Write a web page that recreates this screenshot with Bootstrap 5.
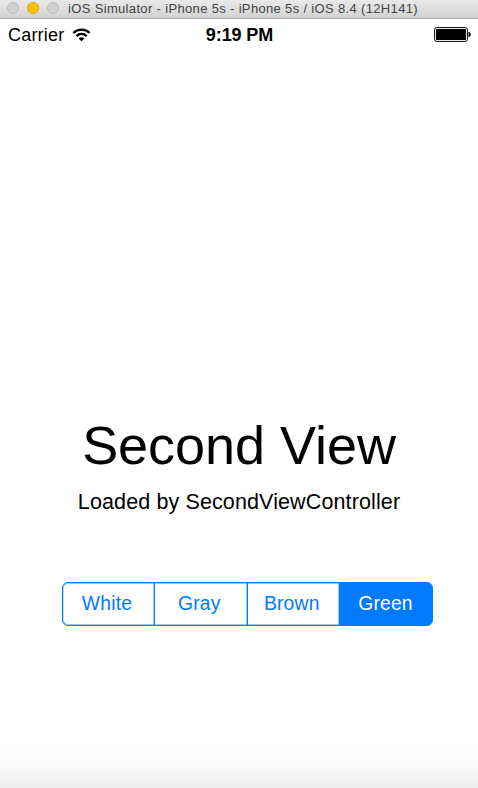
<!DOCTYPE html>
<html lang="en">
<head>
<meta charset="utf-8">
<meta name="viewport" content="width=device-width, initial-scale=1">
<title>iOS Simulator</title>
<link href="https://cdn.jsdelivr.net/npm/bootstrap@5.3.0/dist/css/bootstrap.min.css" rel="stylesheet">
<style>
body{font-family:"Liberation Sans",Arial,sans-serif;color:#000;height:788px;overflow:hidden;background:#fff}
.titlebar{height:19px;background:linear-gradient(#e9e9e9,#d2d2d2);border-bottom:1px solid #ababab;padding:0 0 2px 7px}
.dot{width:12px;height:12px;background:#cfcfcf;border:1px solid #b9b9b9;margin-right:8px}
.dot-min{background:#ffbe05;border-color:#e2a30c}
.wtitle{font-size:13px;line-height:16px;padding-top:1px;color:#444;margin-left:1px;letter-spacing:.34px}
.status{height:31px;padding:0 7px 0 8px;font-size:18px;line-height:29px}
.status > div{flex:1 1 0}
.carrier{letter-spacing:.2px;padding-top:2px}
.clock{padding-top:2px;letter-spacing:-.1px}
.heading{font-size:54px;line-height:60px;margin:365px 0 0;font-weight:400;letter-spacing:-.05px}
.sub{font-size:21.5px;line-height:26px;margin:14px 0 0;letter-spacing:.12px}
.seg{width:371px;height:44px;margin:66.5px 0 0 62px}
.seg .btn{--bs-btn-color:#007aff;--bs-btn-border-color:#007aff;--bs-btn-active-color:#fff;--bs-btn-active-bg:#007aff;--bs-btn-active-border-color:#007aff;--bs-btn-border-radius:6px;font-size:19.3px;line-height:1;letter-spacing:.2px;flex:0 0 93.5px;padding:0 3px 0 0;box-shadow:inset 0 1px 0 #007aff66,inset 0 -1px 0 #007aff66,inset -1px 0 0 #007aff66}
.seg .btn:first-child{flex-basis:93px;box-shadow:inset 0 1px 0 #007aff66,inset 0 -1px 0 #007aff66,inset 1px 0 0 #007aff44,inset -1px 0 0 #007aff66}
.seg .btn.active{flex:1 1 0;padding-right:1px}
.fade-foot{height:45px;background:linear-gradient(#fff,#fafafa 50%,#eee)}
</style>
<script src="https://cdn.jsdelivr.net/npm/bootstrap@5.3.0/dist/js/bootstrap.bundle.min.js"></script>
</head>
<body class="d-flex flex-column">
<header class="titlebar d-flex align-items-center flex-shrink-0">
  <span class="dot rounded-circle"></span><span class="dot dot-min rounded-circle"></span><span class="dot rounded-circle"></span>
  <span class="wtitle text-nowrap">iOS Simulator - iPhone 5s - iPhone 5s / iOS 8.4 (12H141)</span>
</header>
<div class="status d-flex align-items-center flex-shrink-0">
  <div class="d-flex align-items-center"><span class="carrier">Carrier</span>
    <svg class="ms-2" width="19" height="14" viewBox="0 0 20 15" fill="none" stroke="#000" stroke-width="2.4"><path d="M1.3 5.4a12.2 12.2 0 0 1 17.4 0M4.5 8.7a7.7 7.7 0 0 1 11 0"/><path d="M6.9 11.3a4.5 4.5 0 0 1 6.2 0L10 14.3z" fill="#000" stroke="none"/></svg>
  </div>
  <div class="text-center fw-bold clock">9:19 PM</div>
  <div class="d-flex justify-content-end">
    <svg width="37" height="15" viewBox="0 0 37 15"><rect x=".6" y=".6" width="32.8" height="13.8" rx="2" fill="none" stroke="#000"/><rect x="2" y="2" width="30" height="11" rx=".6"/><path d="M34.5 5h.8q1.5.8 1.5 2.5t-1.5 2.5h-.8z"/></svg>
  </div>
</div>
<main class="flex-grow-1">
  <h1 class="heading text-center">Second View</h1>
  <p class="sub text-center">Loaded by SecondViewController</p>
  <div class="seg btn-group d-flex" role="group">
    <button type="button" class="btn">White</button>
    <button type="button" class="btn">Gray</button>
    <button type="button" class="btn">Brown</button>
    <button type="button" class="btn active">Green</button>
  </div>
</main>
<footer class="fade-foot flex-shrink-0"></footer>
</body>
</html>
